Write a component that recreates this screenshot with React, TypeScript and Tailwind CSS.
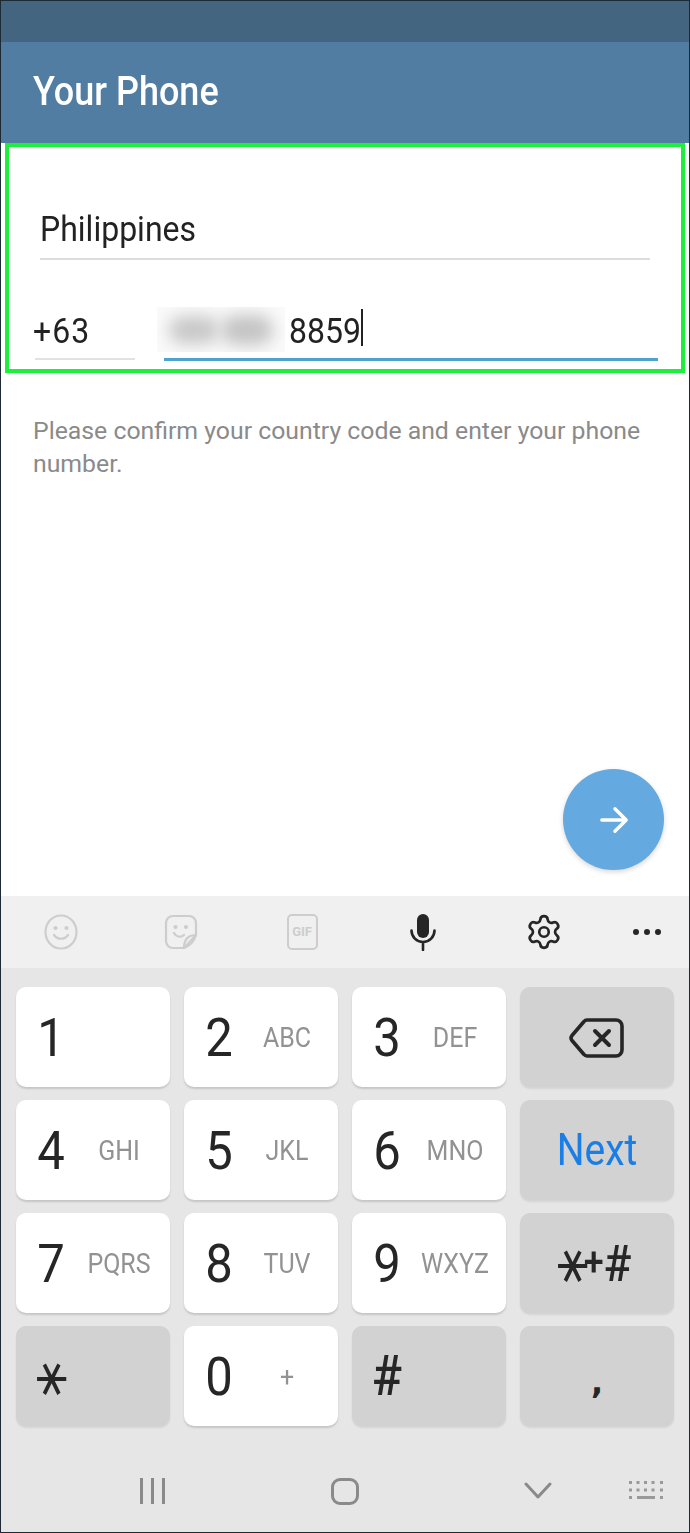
import React from 'react'
import { Settings } from 'lucide-react'

const digitKeys: Record<string, string> = {
  '1': '', '2': 'ABC', '3': 'DEF', '4': 'GHI', '5': 'JKL', '6': 'MNO', '7': 'PQRS', '8': 'TUV', '9': 'WXYZ', '0': '+',
}

const Digit = ({ value }: { value: string }) => (
  <div className="flex h-[100px] w-[154px] items-center rounded-[10px] bg-white shadow-[0_2px_2px_rgba(0,0,0,0.14)]">
    <span className="w-[70px] scale-y-[1.1] text-center text-[49px] leading-none text-[#262626]">{value}</span>
    <span className="flex w-[66px] scale-y-[1.12] justify-center whitespace-nowrap text-[25px] leading-none text-[#929292]">{digitKeys[value]}</span>
  </div>
)

const GrayKey = ({ children, className = '' }: { children?: React.ReactNode; className?: string }) => (
  <div className={`flex h-[100px] w-[154px] items-center rounded-[10px] bg-[#d2d2d2] shadow-[0_2px_2px_rgba(0,0,0,0.08)] ${className}`}>
    {children}
  </div>
)

const Star = ({ className = '' }: { className?: string }) => (
  <span className={`mt-[-7px] inline-block scale-y-[1.15] font-['DejaVu_Sans',sans-serif] text-[52px] leading-none tracking-[-12px] text-[#262626] ${className}`}>⚹</span>
)

const App = () => {
  return (
    <div className="flex h-[1533px] w-[690px] flex-col border border-[#1d2a36] bg-white font-['Roboto',sans-serif]">
      <div className="h-[41px] bg-[#44657f]" />
      <header className="flex h-[101px] items-center bg-[#517da2] pb-[2px] pl-[32px]">
        <h1 className="scale-y-[1.12] text-[36px] font-medium text-white">Your Phone</h1>
      </header>

      <section className="mx-[4px] h-[230px] border-[4px] border-[#1cf03c] bg-white">
        <div className="mx-[31px] mt-[58px] h-[55px] border-b-2 border-[#dcdcdc]">
          <span className="inline-block scale-y-[1.12] text-[32px] leading-[49px] text-[#222]">Philippines</span>
        </div>
        <div className="mt-[44px] flex pl-[26px]">
          <div className="h-[56px] w-[100px] border-b-2 border-[#e2e2e2]">
            <span className="ml-[-2px] inline-block scale-y-[1.12] text-[32px] leading-[54px] tracking-[1px] text-[#222]">+63</span>
          </div>
          <div className="ml-[29px] flex h-[57px] w-[494px] border-b-[3px] border-[#4fa3d1]">
            <div className="ml-[-7px] mt-[3px] flex h-[45px] w-[128px] items-center justify-center gap-[2px] overflow-hidden bg-[#fafafa]">
              <div className="h-[28px] w-[50px] rounded-full bg-[#c8c8c8] blur-[8px]" />
              <div className="h-[30px] w-[52px] rounded-full bg-[#c4c4c4] blur-[8px]" />
            </div>
            <span className="ml-[4px] inline-block scale-y-[1.12] text-[32px] leading-[54px] text-[#222]">8859</span>
            <div className="mt-[5px] h-[37px] w-[2px] bg-[#222]" />
          </div>
        </div>
      </section>

      <main className="flex flex-1 flex-col px-[32px] pb-[26px] pt-[41px]">
        <p className="text-[24.8px] leading-[33px] text-[#8a8a8a]">
          Please confirm your country code and enter your phone number.
        </p>
        <button className="mr-[-7px] mt-auto flex h-[101px] w-[101px] items-center justify-center self-end rounded-full bg-[#64a9e0] shadow-[0_2px_5px_rgba(0,0,0,0.16)]">
          <svg width="30" height="30" viewBox="0 0 32 32" fill="none" stroke="white" strokeWidth="3.6" strokeLinecap="round" strokeLinejoin="round">
            <path d="M3 16h26M17 4l12 12-12 12" />
          </svg>
        </button>
      </main>

      <div className="flex h-[72px] items-center bg-[#f0f0f0]">
        <div className="flex w-[120px] justify-center">
          <svg width="34" height="36" viewBox="0 0 34 36" fill="none" stroke="#cdcdcd" strokeWidth="2.2" strokeLinecap="round">
            <ellipse cx="17" cy="18" rx="15.5" ry="16.500" />
            <path d="M10 21c3.500 5 10.500 5 14 0" />
            <circle cx="11.5" cy="14" r="1" fill="#cdcdcd" />
            <circle cx="22.5" cy="14" r="1" fill="#cdcdcd" />
          </svg>
        </div>
        <div className="flex w-[121px] justify-center">
          <svg width="34" height="36" viewBox="0 0 34 36" fill="none" stroke="#cdcdcd" strokeWidth="2.2" strokeLinecap="round" strokeLinejoin="round">
            <path d="M20 34H9a7 7 0 0 1-7-7V9a7 7 0 0 1 7-7h16a7 7 0 0 1 7 7v12z" />
            <path d="M20 34c0-8 4-13 12-13M20 34c5-2 10-6 12-13" />
            <path d="M10 19c2 4 7 5 10 2" />
            <circle cx="11.5" cy="13" r="1" fill="#cdcdcd" />
            <circle cx="22" cy="13" r="1" fill="#cdcdcd" />
          </svg>
        </div>
        <div className="flex w-[121px] justify-center">
          <div className="flex h-[36px] w-[31px] items-center justify-center rounded-[5px] border-[2px] border-[#cdcdcd] text-[13px] font-bold text-[#cdcdcd]">GIF</div>
        </div>
        <div className="flex w-[121px] justify-center">
          <svg width="28" height="38" viewBox="0 0 28 38" fill="none" stroke="#262626" strokeWidth="2.6" strokeLinecap="round">
            <rect x="8" y="1" width="12" height="24" rx="6" fill="#262626" stroke="none" />
            <path d="M2.500 17.500a11.500 11.500 0 0 0 23 0M14 29v8" />
          </svg>
        </div>
        <div className="flex w-[122px] justify-center">
          <Settings size={38} color="#262626" strokeWidth={1.7} />
        </div>
        <div className="flex w-[84px] justify-center gap-[5px]">
          <div className="h-[6px] w-[6px] rounded-full bg-[#262626]" />
          <div className="h-[6px] w-[6px] rounded-full bg-[#262626]" />
          <div className="h-[6px] w-[6px] rounded-full bg-[#262626]" />
        </div>
      </div>

      <div className="flex h-[564px] flex-col bg-[#e6e6e6]">
        <div className="grid grid-cols-[154px_154px_154px_154px] gap-x-[14px] gap-y-[13px] pl-[15px] pt-[19px]">
          <Digit value="1" />
          <Digit value="2" />
          <Digit value="3" />
          <GrayKey className="justify-center">
            <svg className="mt-[2px]" width="56" height="42" viewBox="0 0 56 42" fill="none" stroke="#262626" strokeWidth="3.6" strokeLinejoin="round" strokeLinecap="round">
              <path d="M18 3h29a6 6 0 0 1 6 6v24a6 6 0 0 1-6 6H18a4 4 0 0 1-3-1.500L3 23.500a4 4 0 0 1 0-5L15 4.500A4 4 0 0 1 18 3z" />
              <path d="M26 14l14 14M40 14L26 28" strokeWidth="4" />
            </svg>
          </GrayKey>
          <Digit value="4" />
          <Digit value="5" />
          <Digit value="6" />
          <GrayKey className="justify-center">
            <span className="scale-y-[1.12] text-[39px] text-[#1a7ee6]">Next</span>
          </GrayKey>
          <Digit value="7" />
          <Digit value="8" />
          <Digit value="9" />
          <GrayKey className="justify-center pr-[6px]">
            <Star className="mr-[8px]" />
            <span className="scale-y-[1.12] text-[36px] font-medium leading-none text-[#262626]">+</span>
            <span className="scale-y-[1.1] text-[46px] font-medium leading-none text-[#262626]">#</span>
          </GrayKey>
          <GrayKey>
            <Star className="ml-[20px]" />
          </GrayKey>
          <Digit value="0" />
          <GrayKey>
            <span className="ml-[20px] scale-y-[1.1] text-[50px] font-medium leading-none text-[#262626]">#</span>
          </GrayKey>
          <GrayKey className="justify-center">
            <span className="mt-[12px] font-['DejaVu_Sans',sans-serif] text-[32px] font-bold leading-none text-[#262626]">,</span>
          </GrayKey>
        </div>

        <nav className="flex flex-1 items-center pt-[24px]">
          <div className="ml-[139px] flex gap-[8px]">
            <div className="h-[26px] w-[3px] bg-[#8a8a8a]" />
            <div className="h-[26px] w-[3px] bg-[#8a8a8a]" />
            <div className="h-[26px] w-[3px] bg-[#8a8a8a]" />
          </div>
          <div className="ml-[166px] h-[27px] w-[28px] rounded-[9px] border-[3px] border-[#8a8a8a]" />
          <svg className="ml-[165px]" width="28" height="18" viewBox="0 0 28 18" fill="none" stroke="#8a8a8a" strokeWidth="3" strokeLinecap="round" strokeLinejoin="round">
            <path d="M2 2l12 13L26 2" />
          </svg>
          <svg className="ml-[77px]" width="34" height="20" viewBox="0 0 34 20" fill="#999">
            <path d="M0 0h3v3H0zM7.500 0h3v3h-3zM15 0h3v3h-3zM22.500 0h3v3h-3zM31 0h3v3h-3zM0 7.500h3v3H0zM7.500 7.500h3v3h-3zM15 7.500h3v3h-3zM22.500 7.500h3v3h-3zM31 7.500h3v3h-3zM0 15h3v3H0zM8 15h18v3H8zM31 15h3v3h-3z" />
          </svg>
        </nav>
      </div>
    </div>
  )
}

export default App
